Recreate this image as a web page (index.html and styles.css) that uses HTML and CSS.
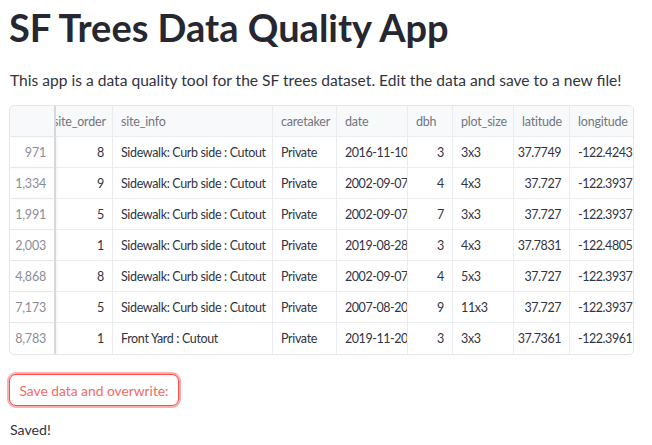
FILE: index.html
```html
<!DOCTYPE html>
<html>
<head>
<meta charset="utf-8">
<link rel="stylesheet" href="styles.css">
</head>
<body>
<main class="page">
  <h1 class="title">SF Trees Data Quality App</h1>
  <p class="lead">This app is a data quality tool for the SF trees dataset. Edit the data and save to a new file!</p>
  <div class="grid-wrap">
    <div class="grid">
      <div class="c h idx"></div>
      <div class="c h clip"><span>site_order</span></div>
      <div class="c h">site_info</div>
      <div class="c h">caretaker</div>
      <div class="c h">date</div>
      <div class="c h">dbh</div>
      <div class="c h">plot_size</div>
      <div class="c h">latitude</div>
      <div class="c h last">longitude</div>

      <div class="c idx r">971</div><div class="c r">8</div><div class="c">Sidewalk: Curb side : Cutout</div><div class="c">Private</div><div class="c n">2016-11-10</div><div class="c r">3</div><div class="c">3x3</div><div class="c r n">37.7749</div><div class="c last n">-122.4243</div>

      <div class="c idx r">1,334</div><div class="c r">9</div><div class="c">Sidewalk: Curb side : Cutout</div><div class="c">Private</div><div class="c n">2002-09-07</div><div class="c r">4</div><div class="c">4x3</div><div class="c r n">37.727</div><div class="c last n">-122.3937</div>

      <div class="c idx r">1,991</div><div class="c r">5</div><div class="c">Sidewalk: Curb side : Cutout</div><div class="c">Private</div><div class="c n">2002-09-07</div><div class="c r">7</div><div class="c">3x3</div><div class="c r n">37.727</div><div class="c last n">-122.3937</div>

      <div class="c idx r">2,003</div><div class="c r">1</div><div class="c">Sidewalk: Curb side : Cutout</div><div class="c">Private</div><div class="c n">2019-08-28</div><div class="c r">3</div><div class="c">4x3</div><div class="c r n">37.7831</div><div class="c last n">-122.4805</div>

      <div class="c idx r">4,868</div><div class="c r">8</div><div class="c">Sidewalk: Curb side : Cutout</div><div class="c">Private</div><div class="c n">2002-09-07</div><div class="c r">4</div><div class="c">5x3</div><div class="c r n">37.727</div><div class="c last n">-122.3937</div>

      <div class="c idx r">7,173</div><div class="c r">5</div><div class="c">Sidewalk: Curb side : Cutout</div><div class="c">Private</div><div class="c n">2007-08-20</div><div class="c r">9</div><div class="c">11x3</div><div class="c r n">37.727</div><div class="c last n">-122.3937</div>

      <div class="c idx r b">8,783</div><div class="c r b">1</div><div class="c b">Front Yard : Cutout</div><div class="c b">Private</div><div class="c b n">2019-11-20</div><div class="c r b">3</div><div class="c b">3x3</div><div class="c r b n">37.7361</div><div class="c last b n">-122.3961</div>
    </div>
  </div>
  <button class="btn">Save data and overwrite:</button>
  <p class="saved">Saved!</p>
</main>
</body>
</html>
```

FILE: styles.css
```css
* { box-sizing: border-box; }
html, body { margin: 0; padding: 0; background: #ffffff; }
body {
  font-family: Lato, "Liberation Sans", sans-serif;
  color: #31333f;
  width: 652px;
  height: 445px;
  overflow: hidden;
}
.page {
  padding: 0 9px;
  display: flex;
  flex-direction: column;
  align-items: flex-start;
}
.title {
  margin: 0;
  padding-top: 4px;
  font-size: 38px;
  font-weight: 700;
  line-height: 46px;
  color: #262730;
}
.lead {
  margin: 18px 0 0 1px;
  font-size: 15.6px;
  line-height: 24px;
}
.grid-wrap {
  margin-top: 13px;
  border: 1px solid #e4e5e9;
  border-radius: 5px;
  overflow: hidden;
}
.grid {
  display: grid;
  grid-template-columns: 46px 57px 160px 64px 71px 45px 61px 56px 63px;
  grid-auto-rows: 31px;
  font-size: 12.5px;
  letter-spacing: -0.35px;
}
.c {
  display: flex;
  align-items: center;
  padding: 0 8px;
  border-right: 1px solid #ebecef;
  border-bottom: 1px solid #ebecef;
  white-space: nowrap;
  overflow: hidden;
}
.c.n { letter-spacing: -0.45px; }
.c.r { justify-content: flex-end; }
.c.last { border-right: none; }
.c.b { border-bottom: none; }
.h {
  background: #f8f9fb;
  color: #737580;
  letter-spacing: -0.2px;
}
.idx {
  border-right: 2px solid #d6d7db;
  box-shadow: 1px 0 2px rgba(0,0,0,0.06);
  color: #8a8c96;
  letter-spacing: -0.2px;
}
.h.idx { background: #f8f9fb; }
.clip { padding-left: 0; }
.clip span { margin-left: -3px; }
.btn {
  margin-top: 19px;
  height: 32px;
  width: 170px;
  padding: 0;
  font-family: inherit;
  font-size: 13.8px;
  color: #f26a66;
  background: #ffffff;
  border: 1px solid #ff4b4b;
  border-radius: 7px;
  box-shadow: 0 0 0 2px rgba(255, 75, 75, 0.45);
}
.saved {
  margin: 12px 0 0 1px;
  font-size: 14.2px;
  line-height: 24px;
}
```
